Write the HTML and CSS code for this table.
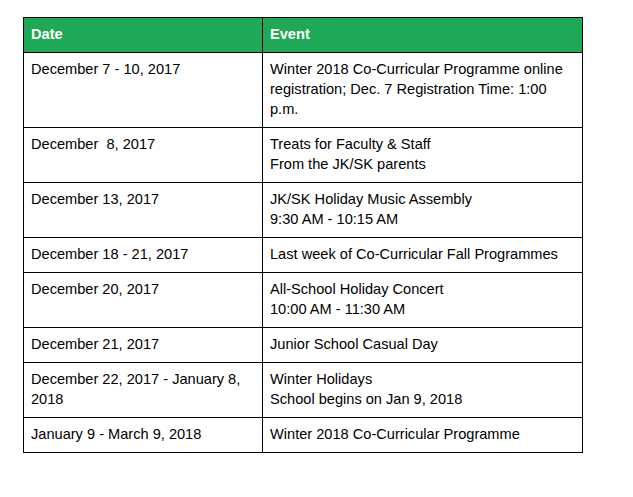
FILE: index.html
```html
<!DOCTYPE html>
<html>
<head>
<meta charset="utf-8">
<link rel="stylesheet" href="styles.css">
</head>
<body>
<table class="events">
  <colgroup><col class="c-date"><col class="c-event"></colgroup>
  <thead>
    <tr><th>Date</th><th>Event</th></tr>
  </thead>
  <tbody>
    <tr><td>December 7 - 10, 2017</td><td>Winter 2018 Co-Curricular Programme online registration; Dec. 7 Registration Time: 1:00 p.m.</td></tr>
    <tr><td>December &nbsp;8, 2017</td><td>Treats for Faculty &amp; Staff<br>From the JK/SK parents</td></tr>
    <tr><td>December 13, 2017</td><td>JK/SK Holiday Music Assembly<br>9:30 AM - 10:15 AM</td></tr>
    <tr><td>December 18 - 21, 2017</td><td>Last week of Co-Curricular Fall Programmes</td></tr>
    <tr><td>December 20, 2017</td><td>All-School Holiday Concert<br>10:00 AM - 11:30 AM</td></tr>
    <tr><td>December 21, 2017</td><td>Junior School Casual Day</td></tr>
    <tr><td>December 22, 2017 - January 8, 2018</td><td>Winter Holidays<br>School begins on Jan 9, 2018</td></tr>
    <tr><td>January 9 - March 9, 2018</td><td>Winter 2018 Co-Curricular Programme</td></tr>
  </tbody>
</table>
</body>
</html>
```
FILE: styles.css
```css
html, body {
  margin: 0;
  padding: 0;
  background: #fff;
}
body {
  font-family: "Liberation Sans", Arial, sans-serif;
  font-size: 14.6px;
  line-height: 20px;
  color: #000;
}
.events {
  border-collapse: collapse;
  table-layout: fixed;
  width: 559px;
  margin: 17px 0 0 23px;
}
.c-date { width: 239px; }
.c-event { width: 320px; }
.events th,
.events td {
  border: 1px solid #000;
  padding: 6px 7px 8px;
  text-align: left;
  vertical-align: top;
}
.events th {
  background: #1fa855;
  color: #fff;
  font-weight: bold;
}
```
